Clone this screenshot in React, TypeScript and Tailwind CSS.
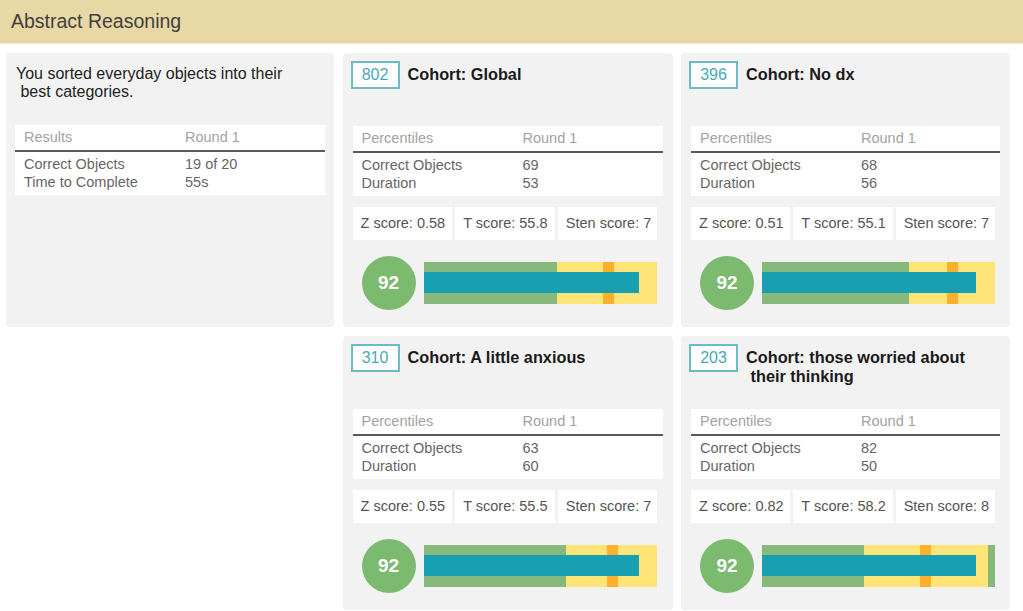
import React from "react";

type Cohort = {
  n: number;
  title: React.ReactNode;
  correct: number;
  duration: number;
  z: string;
  t: string;
  sten: number;
  green: number;
  orange: number;
  tail?: number;
};

const cohorts: Cohort[] = [
  { n: 802, title: "Cohort: Global", correct: 69, duration: 53, z: "0.58", t: "55.8", sten: 7, green: 57, orange: 76.5 },
  { n: 396, title: "Cohort: No dx", correct: 68, duration: 56, z: "0.51", t: "55.1", sten: 7, green: 63, orange: 79.5 },
  { n: 310, title: "Cohort: A little anxious", correct: 63, duration: 60, z: "0.55", t: "55.5", sten: 7, green: 61, orange: 78.6 },
  {
    n: 203,
    title: (
      <>
        Cohort: those worried about
        <br />
        {"\u00a0their thinking"}
      </>
    ),
    correct: 82,
    duration: 50,
    z: "0.82",
    t: "58.2",
    sten: 8,
    green: 43.6,
    orange: 68,
    tail: 3,
  },
];

function ResultTable({ head, rows }: { head: string; rows: [string, string][] }) {
  return (
    <div className="bg-white">
      <div className="flex h-[27px] items-center border-b-2 border-[#5a5a5a] text-[14.5px] text-[#a3a3a3]">
        <span className="w-[170px] pl-[9px]">{head}</span>
        <span>Round 1</span>
      </div>
      <div className="pt-[3px] pb-[4px] text-[14.5px] leading-[18px] text-[#666]">
        {rows.map(([k, v]) => (
          <div key={k} className="flex">
            <span className="w-[170px] pl-[9px]">{k}</span>
            <span>{v}</span>
          </div>
        ))}
      </div>
    </div>
  );
}

function Gauge({ c }: { c: Cohort }) {
  const yellow = 100 - c.green - (c.tail ?? 0);
  return (
    <div className="mt-[16px] flex items-center pl-[9px] pr-[5px]">
      <div className="flex h-[54px] w-[54px] items-center justify-center rounded-full bg-[#7cba6f] text-[19px] font-bold text-white">
        92
      </div>
      <div className="relative ml-[8px] flex h-[42px] flex-1">
        <div className="h-full bg-[#86b97b]" style={{ width: `${c.green}%` }} />
        <div className="h-full bg-[#ffe478]" style={{ width: `${yellow}%` }} />
        {c.tail ? <div className="h-full bg-[#86b97b]" style={{ width: `${c.tail}%` }} /> : null}
        <div className="absolute top-0 h-full w-[11px] bg-[#fbb12b]" style={{ left: `${c.orange}%` }} />
        <div className="absolute left-0 top-[10px] h-[21px] w-[92%] bg-[#179fb2]" />
      </div>
    </div>
  );
}

function CohortCard({ c }: { c: Cohort }) {
  return (
    <div className="rounded-[4px] bg-[#f2f2f2] pt-[8px]">
      <div className="flex h-[65px] items-start px-[8px]">
        <div className="flex h-[28px] w-[49px] shrink-0 items-center justify-center border-2 border-[#6bbcc6] bg-white text-[16px] text-[#4aa8b6]">
          {c.n}
        </div>
        <div className="ml-[8px] mt-[4px] text-[16.3px] font-bold leading-[19px] text-[#1a1a1a]">{c.title}</div>
      </div>
      <div className="px-[10px]">
        <ResultTable
          head="Percentiles"
          rows={[
            ["Correct Objects", String(c.correct)],
            ["Duration", String(c.duration)],
          ]}
        />
        <div className="mt-[11px] mr-[5px] grid h-[33px] grid-cols-3 gap-[3px] text-[14.5px] text-[#555]">
          <div className="flex items-center bg-white pl-[8px]">Z score: {c.z}</div>
          <div className="flex items-center bg-white pl-[8px]">T score: {c.t}</div>
          <div className="flex items-center bg-white pl-[8px]">Sten score: {c.sten}</div>
        </div>
      </div>
      <div className="px-[10px]">
        <Gauge c={c} />
      </div>
    </div>
  );
}

export default function App() {
  return (
    <div className="h-[611px] w-[1023px] overflow-hidden bg-white font-['Liberation_Sans',Arial,sans-serif]">
      <header className="flex h-[44px] items-center border-b border-[#efe6c8] bg-[#e8d8a6] pl-[11px]">
        <h1 className="text-[19.5px] text-[#3f3f3f]">Abstract Reasoning</h1>
      </header>
      <div className="grid grid-cols-[328px_330px_329px] grid-rows-[274px_274px] gap-x-[8.5px] gap-y-[9px] pl-[6px] pt-[9px]">
        <div className="rounded-[4px] bg-[#f2f2f2] px-[9px] pt-[12px]">
          <p className="pl-[1px] text-[16px] leading-[18px] text-[#222]">
            You sorted everyday objects into their
            <br />
            {"\u00a0best categories."}
          </p>
          <div className="mt-[24px]">
            <ResultTable
              head="Results"
              rows={[
                ["Correct Objects", "19 of 20"],
                ["Time to Complete", "55s"],
              ]}
            />
          </div>
        </div>
        <CohortCard c={cohorts[0]} />
        <CohortCard c={cohorts[1]} />
        <div />
        <CohortCard c={cohorts[2]} />
        <CohortCard c={cohorts[3]} />
      </div>
    </div>
  );
}
